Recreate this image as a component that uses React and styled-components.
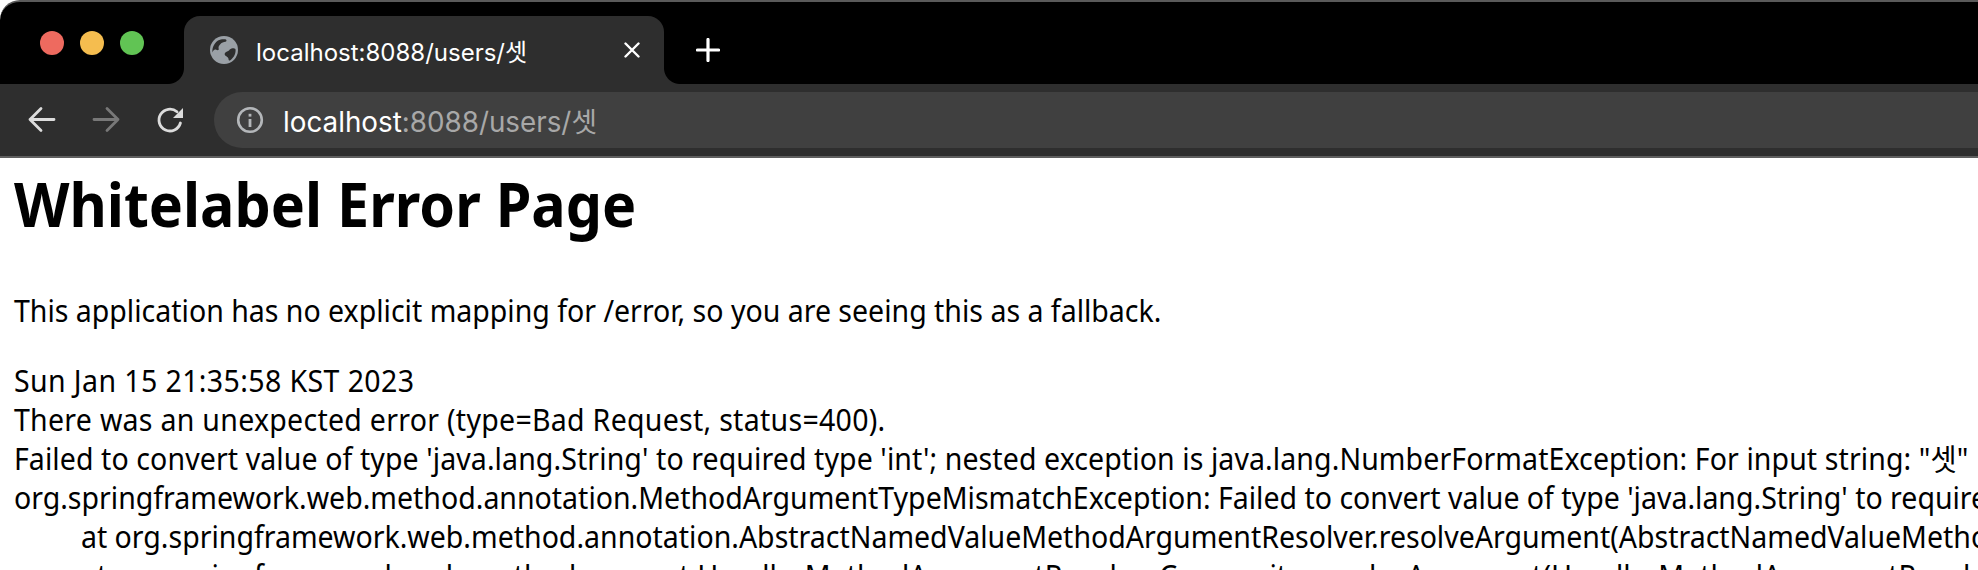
import React from 'react';
import styled, {createGlobalStyle} from 'styled-components';

const GlobalStyle = createGlobalStyle`
    html, body {
        margin: 0;
        background: #fff;
        overflow: hidden;
    }
    #root {
        height: 570px;
        overflow: hidden;
    }
`
const uiFont = `Inter, "Noto Sans CJK KR", sans-serif`;
const pageFont = `"Noto Sans", "Noto Sans CJK KR", sans-serif`;

const TabStrip = styled.div`
    height: 82px;
    background: #000;
    border-top: 2px solid #5a5a5a;
    border-radius: 20px 0 0 0;
    display: flex;
    align-items: flex-end;
    overflow: hidden;
`
const Lights = styled.div`
    width: 184px;
    flex: none;
    align-self: flex-start;
    display: flex;
    gap: 16px;
    padding: 29px 0 0 40px;
    box-sizing: border-box;
`
const Light = styled.span`
    width: 24px;
    height: 24px;
    border-radius: 50%;
    background: ${props => props.color};
`
const Tab = styled.div`
    position: relative;
    width: 480px;
    height: 68px;
    flex: none;
    box-sizing: border-box;
    padding: 0 24px 0 26px;
    background: #2e2e2e;
    border-radius: 16px 16px 0 0;
    display: flex;
    align-items: center;
    color: #fff;
    font: 400 24px ${uiFont};
    &::before, &::after {
        content: '';
        position: absolute;
        bottom: 0;
        width: 16px;
        height: 16px;
    }
    &::before {
        left: -16px;
        background: radial-gradient(circle at 0 0, #000 15.5px, #2e2e2e 16.5px);
    }
    &::after {
        right: -16px;
        background: radial-gradient(circle at 100% 0, #000 15.5px, #2e2e2e 16.5px);
    }
`
const TabTitle = styled.span`
    margin-left: 18px;
    flex: 1;
    white-space: nowrap;
`
const NewTab = styled.button`
    border: 0;
    padding: 0;
    margin: 0 0 22px 32px;
    width: 24px;
    height: 24px;
    background: none;
    display: flex;
`
const Toolbar = styled.div`
    height: 72px;
    background: #2e2e2e;
    border-bottom: 2px solid #5f5f5f;
    display: flex;
    align-items: center;
`
const NavButton = styled.button`
    border: 0;
    padding: 0;
    background: none;
    flex: none;
    width: 32px;
    height: 32px;
    margin-left: ${props => props.$gap}px;
    display: flex;
`
const Omnibox = styled.div`
    flex: 1;
    height: 56px;
    margin-left: 28px;
    padding-left: 22px;
    background: #404040;
    border-radius: 28px 0 0 28px;
    display: flex;
    align-items: center;
    font: 400 27.800px ${uiFont};
    color: #a8a8a8;
`
const Host = styled.span`
    color: #fff;
`
const Url = styled.div`
    margin-left: 19px;
    white-space: nowrap;
`
/* the page font in the shot is taller and narrower than Noto Sans */
const Page = styled.main`
    padding: 0 14.700px;
    color: #000;
    font: 400 30px/39px ${pageFont};
    white-space: pre;
    transform: scaleX(.95);
    transform-origin: 0 0;
`
const Title = styled.h1`
    margin: 0;
    padding-top: 4px;
    font: 700 60.400px/84px ${pageFont};
`
const Lead = styled.p`
    margin: 45px 0 0;
`
const Details = styled.div`
    margin-top: 31px;
    tab-size: 70.500px;
`
const Line = styled.div`
    letter-spacing: ${props => props.$track || 0}px;
`

function GlobeIcon() {
    return <svg width="28" height="28" viewBox="0 0 28 28">
        <circle cx="14" cy="14" r="14" fill="#9aa0a6"/>
        <path d="M2.500 16.500C2 12 3.500 8 8 4.500c2.500-1.300 5-1.500 7.300-1.200 1.500.4 1.700 2 .2 2.500-2 .5-3.700.8-5 2.200-1.600 1.500-2.300 3-1.800 5 .2 1.300-1 1.500-2.500.8-1.500-.8-3 .5-3.700 2.700Z" fill="#2e2e2e"/>
        <path d="M25.500 13.300c.5 3.500-1 8-5.500 11.200-1 .4-1.500-.5-1.500-1.500 0-1.500-1.500-2.200-2.700-3-1.200-1-1.500-2.300-.6-3.300 1-1.200 2.800-1.200 3.800-2.200 1-1.300 2.200-2.300 3.800-2.200 1 .1 2.300.3 2.700 1Z" fill="#2e2e2e"/>
    </svg>
}
function CloseIcon() {
    return <svg width="16" height="16" viewBox="0 0 16 16">
        <path d="M1.500 1.500l13 13M14.500 1.500l-13 13" stroke="#fff" strokeWidth="2.400" strokeLinecap="round"/>
    </svg>
}
function PlusIcon() {
    return <svg width="24" height="24" viewBox="0 0 24 24">
        <path d="M12 1.500v21M1.500 12h21" stroke="#fff" strokeWidth="3.200" strokeLinecap="round"/>
    </svg>
}
function BackIcon({color}) {
    return <svg width="32" height="32" viewBox="0 0 32 32">
        <path d="M28 15.500H4M15 4.500 4 15.500 15 26.500" fill="none" stroke={color} strokeWidth="2.800" strokeLinecap="round" strokeLinejoin="round"/>
    </svg>
}
function ForwardIcon({color}) {
    return <svg width="32" height="32" viewBox="0 0 32 32">
        <path d="M4 15.500h24M17 4.500 28 15.500 17 26.500" fill="none" stroke={color} strokeWidth="2.800" strokeLinecap="round" strokeLinejoin="round"/>
    </svg>
}
function ReloadIcon() {
    return <svg width="32" height="32" viewBox="0 0 32 32">
        <path d="M26.400 19A10.900 10.900 0 1 1 23 7.800" fill="none" stroke="#dcdcdc" strokeWidth="2.800" strokeLinecap="round"/>
        <path d="M29 4v10H19Z" fill="#dcdcdc"/>
    </svg>
}
function InfoIcon() {
    return <svg width="28" height="28" viewBox="0 0 28 28">
        <circle cx="14" cy="14" r="11.800" fill="none" stroke="#b4b7ba" strokeWidth="2.600"/>
        <rect x="12.600" y="13" width="2.800" height="8" fill="#b4b7ba"/>
        <rect x="12.600" y="7.800" width="2.800" height="2.800" fill="#b4b7ba"/>
    </svg>
}

export default function App() {
    return <>
        <GlobalStyle/>
        <TabStrip>
            <Lights>
                <Light color="#ee6a5f"/>
                <Light color="#f5bd4f"/>
                <Light color="#61c454"/>
            </Lights>
            <Tab>
                <GlobeIcon/>
                <TabTitle>localhost:8088/users/셋</TabTitle>
                <CloseIcon/>
            </Tab>
            <NewTab><PlusIcon/></NewTab>
        </TabStrip>
        <Toolbar>
            <NavButton $gap={26}><BackIcon color="#dcdcdc"/></NavButton>
            <NavButton $gap={32}><ForwardIcon color="#787878"/></NavButton>
            <NavButton $gap={32}><ReloadIcon/></NavButton>
            <Omnibox>
                <InfoIcon/>
                <Url><Host>localhost</Host>:8088/users/셋</Url>
            </Omnibox>
        </Toolbar>
        <Page>
            <Title>Whitelabel Error Page</Title>
            <Lead>This application has no explicit mapping for /error, so you are seeing this as a fallback.</Lead>
            <Details>
                <Line $track={.42}>Sun Jan 15 21:35:58 KST 2023</Line>
                <Line $track={.3}>There was an unexpected error (type=Bad Request, status=400).</Line>
                <Line $track={.1}>Failed to convert value of type 'java.lang.String' to required type 'int'; nested exception is java.lang.NumberFormatException: For input string: "셋"</Line>
                <Line>org.springframework.web.method.annotation.MethodArgumentTypeMismatchException: Failed to convert value of type 'java.lang.String' to required type 'int'; nested exception is java.lang.NumberFormatException</Line>
                <Line>{'\t'}at org.springframework.web.method.annotation.AbstractNamedValueMethodArgumentResolver.resolveArgument(AbstractNamedValueMethodArgumentResolver.java:133)</Line>
                <Line>{'\t'}at org.springframework.web.method.support.HandlerMethodArgumentResolverComposite.resolveArgument(HandlerMethodArgumentResolverComposite.java:122)</Line>
            </Details>
        </Page>
    </>
}
